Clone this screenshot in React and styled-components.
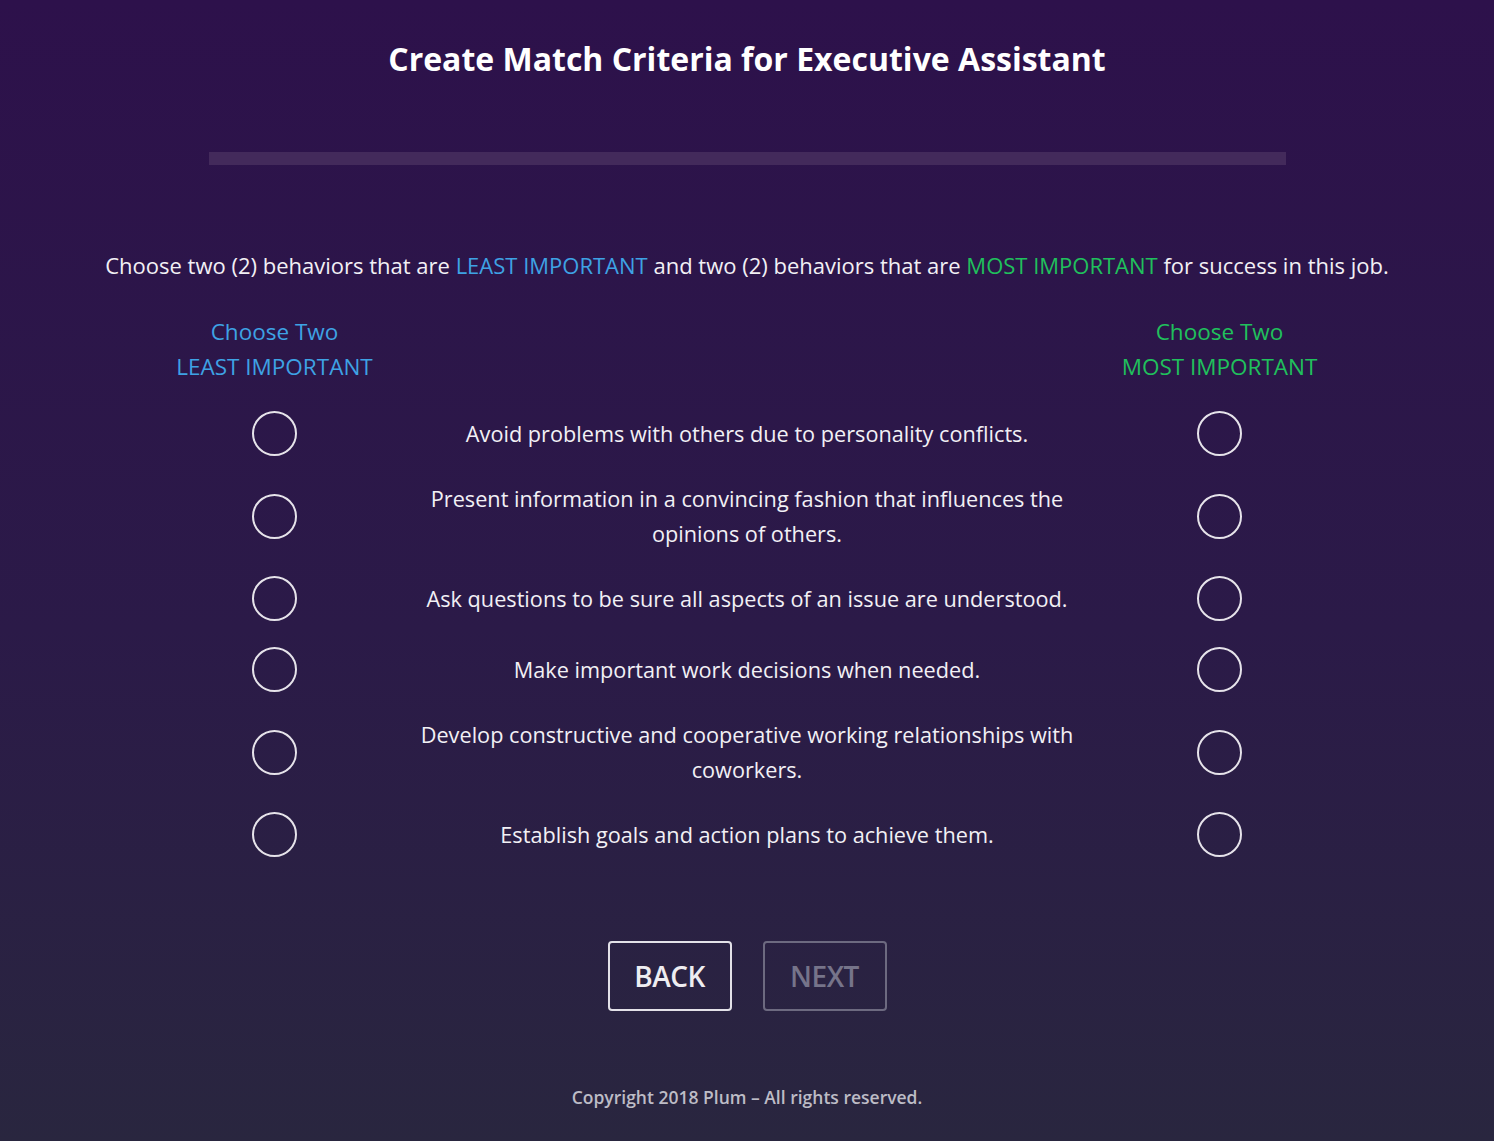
import React from "react";
import styled, { createGlobalStyle } from "styled-components";

const Global = createGlobalStyle`
  html, body { margin: 0; padding: 0; }
  body {
    font-family: "Open Sans", Lato, sans-serif;
    background: #29263f;
    color: #fff;
  }
`;

const Page = styled.div`
  width: 1494px;
  min-height: 1141px;
  display: flex;
  flex-direction: column;
  align-items: center;
  background: linear-gradient(180deg, #2d114b 0%, #2b1a48 55%, #29263f 100%);
`;

const Title = styled.h1`
  margin: 38px 0 0;
  font-size: 32px;
  font-weight: 700;
  line-height: 42px;
  color: #fff;
`;

const Track = styled.div`
  margin-top: 72px;
  width: 1077px;
  height: 13px;
  background: #432a5b;
`;

const Instruction = styled.p`
  margin: 86px 0 0;
  font-size: 22px;
  line-height: 28px;
  color: #f2f0f5;
`;

const Hl = styled.span`
  color: ${(p) => (p.$most ? "#20c05c" : "#3ea2e4")};
`;

const Table = styled.div`
  margin-top: 35px;
  display: grid;
  grid-template-columns: 259px 686px 259px;
  width: 1204px;
`;

const Head = styled.div`
  text-align: center;
  font-size: 22.5px;
  line-height: 35px;
  color: ${(p) => (p.$most ? "#20c05c" : "#3ea2e4")};
  padding-bottom: 14px;
  white-space: nowrap;
`;

const Cell = styled.div`
  display: flex;
  align-items: center;
  justify-content: center;
  min-height: 71px;
  padding: ${(p) => (p.$tall ? "12px 0" : "0")};
  box-sizing: border-box;
`;

const Radio = styled.span`
  display: block;
  width: 41px;
  height: 41px;
  border: 2px solid #e6e3ea;
  border-radius: 50%;
`;

const Behavior = styled.div`
  text-align: center;
  font-size: 21.7px;
  line-height: 35px;
  color: #f2f0f5;
`;

const Buttons = styled.div`
  display: flex;
  gap: 31px;
  margin-top: 71px;
`;

const Button = styled.button`
  width: 124px;
  height: 70px;
  background: transparent;
  border: 2px solid ${(p) => (p.$disabled ? "#6d6a80" : "#e3e1e8")};
  border-radius: 4px;
  color: ${(p) => (p.$disabled ? "#76748a" : "#eeedf1")};
  font-family: "Open Sans", sans-serif;
  font-size: 28px;
  font-weight: 600;
  letter-spacing: -0.5px;
  cursor: pointer;
`;

const Footer = styled.footer`
  margin-top: 74px;
  font-size: 17.5px;
  font-weight: 600;
  color: #bdbcc6;
`;

const rows = [
  "Avoid problems with others due to personality conflicts.",
  "Present information in a convincing fashion that influences the opinions of others.",
  "Ask questions to be sure all aspects of an issue are understood.",
  "Make important work decisions when needed.",
  "Develop constructive and cooperative working relationships with coworkers.",
  "Establish goals and action plans to achieve them.",
];
const tall = [false, true, false, false, true, false];

export default function App() {
  return (
    <>
      <Global />
      <Page>
        <Title>Create Match Criteria for Executive Assistant</Title>
        <Track />
        <Instruction>
          Choose two (2) behaviors that are <Hl>LEAST IMPORTANT</Hl> and two (2) behaviors that are{" "}
          <Hl $most>MOST IMPORTANT</Hl> for success in this job.
        </Instruction>
        <Table>
          <Head>Choose Two<br />LEAST IMPORTANT</Head>
          <div />
          <Head $most>Choose Two<br />MOST IMPORTANT</Head>
          {rows.map((r, i) => (
            <React.Fragment key={i}>
              <Cell $tall={tall[i]}><Radio /></Cell>
              <Cell $tall={tall[i]}><Behavior>{r}</Behavior></Cell>
              <Cell $tall={tall[i]}><Radio /></Cell>
            </React.Fragment>
          ))}
        </Table>
        <Buttons>
          <Button>BACK</Button>
          <Button $disabled>NEXT</Button>
        </Buttons>
        <Footer>Copyright 2018 Plum – All rights reserved.</Footer>
      </Page>
    </>
  );
}
